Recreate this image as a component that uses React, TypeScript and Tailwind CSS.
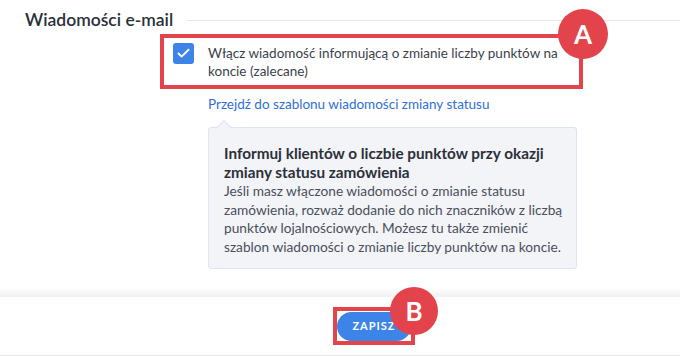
import { Check } from "lucide-react";

const font = { fontFamily: "Lato, 'Noto Sans', sans-serif" };

export default function App() {
  return (
    <div
      className="relative w-[680px] h-[356px] overflow-hidden bg-white text-[#3a3f4b]"
      style={font}
    >
      {/* section header */}
      <div className="flex items-center h-[40px] pl-[25px]">
        <h2 className="text-[17.5px] font-semibold text-[#2b303a] leading-none">
          Wiadomości e-mail
        </h2>
        <div className="flex-1 ml-[14px] h-px bg-[#e6e8ec]" />
      </div>

      <div className="pl-[160px] -mt-[6px]">
        {/* checkbox row, annotated A */}
        <div className="relative w-[423px] h-[55px] border-4 border-[#e3434b] flex items-start pl-[9px] pt-[5px]">
          <div className="w-[21px] h-[21px] rounded-[3px] bg-[#3d84e8] flex items-center justify-center shrink-0">
            <Check className="w-[15px] h-[15px] text-white" strokeWidth={3} />
          </div>
          <p className="ml-[14px] text-[13.5px] leading-[18px] text-[#3a3f4b] pt-[1px]">
            Włącz wiadomość informującą o zmianie liczby punktów na
            <br />
            koncie (zalecane)
          </p>
          <div className="absolute -right-[29px] -top-[29px] w-[50px] h-[50px] rounded-full bg-[#e3434b] flex items-center justify-center text-white text-[26px] font-bold">
            A
          </div>
        </div>

        <div className="pl-[48px]">
          <a className="block mt-[6px] text-[13.5px] leading-[18px] text-[#2f70d8]">
            Przejdź do szablonu wiadomości zmiany statusu
          </a>

          {/* info box */}
          <div className="relative mt-[14px] w-[369px] h-[142px] rounded-[3px] border border-[#dde4f3] bg-[#f3f4f8] pl-[15px] pt-[16px]">
            <div className="absolute -top-[6px] left-[10px] w-[10px] h-[10px] rotate-45 bg-[#f3f4f8] border-l border-t border-[#dde4f3]" />
            <h3 className="text-[15.3px] font-bold leading-[19px] text-[#2b303a]">
              Informuj klientów o liczbie punktów przy okazji
              <br />
              zmiany statusu zamówienia
            </h3>
            <p className="text-[13.7px] leading-[18.5px] text-[#4a4f5b]">
              Jeśli masz włączone wiadomości o zmianie statusu
              <br />
              zamówienia, rozważ dodanie do nich znaczników z liczbą
              <br />
              punktów lojalnościowych. Możesz tu także zmienić
              <br />
              szablon wiadomości o zmianie liczby punktów na koncie.
            </p>
          </div>
        </div>
      </div>

      {/* footer */}
      <div className="mt-[19px] h-[9px] bg-gradient-to-b from-white to-[#f0f0f0]" />
      <div className="h-[59px] border-b border-[#e6e6e6] flex pl-[333px] pt-[10px]">
        <div className="relative w-[82px] h-[38px] border-4 border-[#e3434b] bg-white flex items-center justify-center">
          <button className="w-[74px] h-[29px] rounded-full bg-[#3d84e8] text-white text-[11px] font-bold tracking-[1px]">
            ZAPISZ
          </button>
          <div className="absolute -right-[27px] -top-[24px] w-[48px] h-[48px] rounded-full bg-[#e3434b] flex items-center justify-center text-white text-[26px] font-bold">
            B
          </div>
        </div>
      </div>
    </div>
  );
}
